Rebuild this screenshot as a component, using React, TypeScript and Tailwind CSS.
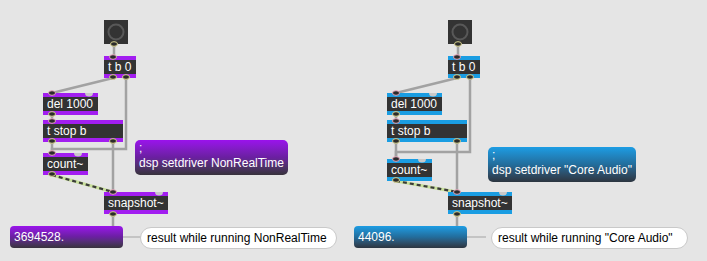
import React from "react";

function Obj({ pos, label, strip }: { pos: string; label: string; strip: string }) {
  return (
    <div className={`absolute flex h-[22px] flex-col ${pos}`}>
      <div className={`h-[4px] ${strip}`} />
      <div className="flex h-[14px] items-center whitespace-nowrap bg-[#333333] pl-[4px] text-[12px] leading-[14px] text-white">
        {label}
      </div>
      <div className={`h-[4px] ${strip}`} />
    </div>
  );
}

// patch cords for one column; dx shifts the whole column
function Cords({ dx, countY, busY }: { dx: number; countY: number; busY: number }) {
  const c = "#a2a2a2";
  return (
    <g>
      <line x1={114 + dx} y1={44} x2={114 + dx} y2={57} stroke={c} strokeWidth={2.5} />
      <line x1={113 + dx} y1={78} x2={52 + dx} y2={93} stroke={c} strokeWidth={2.5} />
      <polyline
        points={`${126 + dx},78 ${126 + dx},${busY} ${52 + dx},${busY} ${52 + dx},${countY}`}
        fill="none"
        stroke={c}
        strokeWidth={2.5}
      />
      <line x1={52 + dx} y1={114} x2={52 + dx} y2={121} stroke={c} strokeWidth={2.5} />
      <line x1={52 + dx} y1={141} x2={52 + dx} y2={countY} stroke={c} strokeWidth={2.5} />
      <line x1={113 + dx} y1={141} x2={113 + dx} y2={193} stroke={c} strokeWidth={2.5} />
      {/* signal cord */}
      <line x1={52 + dx} y1={countY + 22} x2={113 + dx} y2={192} stroke="#c9e09c" strokeWidth={3} />
      <line
        x1={52 + dx}
        y1={countY + 22}
        x2={113 + dx}
        y2={192}
        stroke="#3a3a3a"
        strokeWidth={2.2}
        strokeDasharray="4 3"
      />
      <line x1={113 + dx} y1={214} x2={113 + dx} y2={227} stroke={c} strokeWidth={2.5} />
      <line x1={123 + dx} y1={237} x2={142 + dx} y2={237} stroke="#c4c4c4" strokeWidth={2} />
    </g>
  );
}

function Port({ x, y, top, free }: { x: number; y: number; top?: boolean; free?: boolean }) {
  if (free) {
    return <path d={`M${x - 4} ${y} A4 3.5 0 0 0 ${x + 4} ${y} Z`} fill="#c9c9c9" />;
  }
  return (
    <ellipse
      cx={x}
      cy={y}
      rx={3.5}
      ry={2.3}
      fill="#2b2b2b"
      stroke={top ? "#e7a7bd" : "#d9d48e"}
      strokeWidth={1}
    />
  );
}

function Ports({ dx, countY }: { dx: number; countY: number }) {
  return (
    <g>
      <Port x={114 + dx} y={44} />
      <Port x={113 + dx} y={57} top />
      <Port x={113 + dx} y={77} />
      <Port x={126 + dx} y={77} />
      <Port x={52 + dx} y={93} top />
      <Port x={89 + dx} y={93} free />
      <Port x={52 + dx} y={114} />
      <Port x={52 + dx} y={121} top />
      <Port x={52 + dx} y={141} />
      <Port x={113 + dx} y={141} />
      <Port x={52 + dx} y={countY} top />
      <Port x={78 + dx} y={countY} free />
      <Port x={52 + dx} y={countY + 21} />
      <Port x={113 + dx} y={192} top />
      <Port x={159 + dx} y={192} free />
      <Port x={113 + dx} y={214} />
    </g>
  );
}

function Bang({ pos }: { pos: string }) {
  return (
    <div className={`absolute flex h-[24px] w-[24px] items-center justify-center bg-[#333333] ${pos}`}>
      <svg width="20" height="20" viewBox="0 0 20 20">
        <circle cx="10" cy="10" r="7.5" fill="none" stroke="#585858" strokeWidth="2" />
      </svg>
    </div>
  );
}

export default function App() {
  return (
    <div
      className="relative h-[261px] w-[707px] overflow-hidden bg-[#e5e5e5]"
      style={{ fontFamily: '"Liberation Sans", Arial, sans-serif' }}
    >
      <svg className="absolute left-0 top-0" width="707" height="261">
        <Cords dx={0} countY={153} busY={149} />
        <Cords dx={344} countY={159} busY={152} />
      </svg>

      {/* NonRealTime */}
      <Bang pos="left-[104px] top-[20px]" />
      <Obj pos="left-[104px] top-[56px] w-[32px]" label="t b 0" strip="bg-[#a21ef0]" />
      <Obj pos="left-[43px] top-[93px] w-[55px]" label="del 1000" strip="bg-[#a21ef0]" />
      <Obj pos="left-[43px] top-[120px] w-[80px]" label="t stop b" strip="bg-[#a21ef0]" />
      <Obj pos="left-[43px] top-[153px] w-[45px]" label="count~" strip="bg-[#a21ef0]" />
      <Obj pos="left-[104px] top-[192px] w-[64px]" label="snapshot~" strip="bg-[#a21ef0]" />
      <div className="absolute left-[135px] top-[140px] h-[35px] w-[153px] rounded-[5px] bg-gradient-to-b from-[#9a12ec] via-[#6a1fa0] to-[#38323c] pl-[4px] pt-[1px] text-[12px] leading-[15px] text-white">
        <div>;</div>
        <div>dsp setdriver NonRealTime</div>
      </div>
      <div className="absolute left-[10px] top-[226px] flex h-[22px] w-[113px] items-center rounded-[4px] bg-gradient-to-b from-[#9a12ec] via-[#6a1fa0] to-[#38323c] pl-[4px] text-[12px] text-white">
        3694528.
      </div>
      <div className="absolute left-[140px] top-[227px] flex h-[22px] w-[197px] items-center rounded-full border border-[#c9c9c9] bg-white pl-[6px] text-[12px] text-black">
        result while running NonRealTime
      </div>

      {/* Core Audio */}
      <Bang pos="left-[448px] top-[20px]" />
      <Obj pos="left-[448px] top-[56px] w-[32px]" label="t b 0" strip="bg-[#1a9de2]" />
      <Obj pos="left-[387px] top-[93px] w-[55px]" label="del 1000" strip="bg-[#1a9de2]" />
      <Obj pos="left-[387px] top-[120px] w-[80px]" label="t stop b" strip="bg-[#1a9de2]" />
      <Obj pos="left-[387px] top-[159px] w-[45px]" label="count~" strip="bg-[#1a9de2]" />
      <Obj pos="left-[448px] top-[192px] w-[64px]" label="snapshot~" strip="bg-[#1a9de2]" />
      <div className="absolute left-[488px] top-[147px] h-[35px] w-[148px] rounded-[5px] bg-gradient-to-b from-[#1c9de4] via-[#226d9c] to-[#2c3540] pl-[4px] pt-[1px] text-[12px] leading-[15px] text-white">
        <div>;</div>
        <div>dsp setdriver "Core Audio"</div>
      </div>
      <div className="absolute left-[354px] top-[226px] flex h-[22px] w-[113px] items-center rounded-[4px] bg-gradient-to-b from-[#1c9de4] via-[#226d9c] to-[#2c3540] pl-[4px] text-[12px] text-white">
        44096.
      </div>
      <div className="absolute left-[491px] top-[227px] flex h-[22px] w-[197px] items-center rounded-full border border-[#c9c9c9] bg-white pl-[6px] text-[12px] text-black">
        result while running "Core Audio"
      </div>

      <svg className="pointer-events-none absolute left-0 top-0" width="707" height="261">
        <Ports dx={0} countY={153} />
        <Ports dx={344} countY={159} />
      </svg>
    </div>
  );
}
